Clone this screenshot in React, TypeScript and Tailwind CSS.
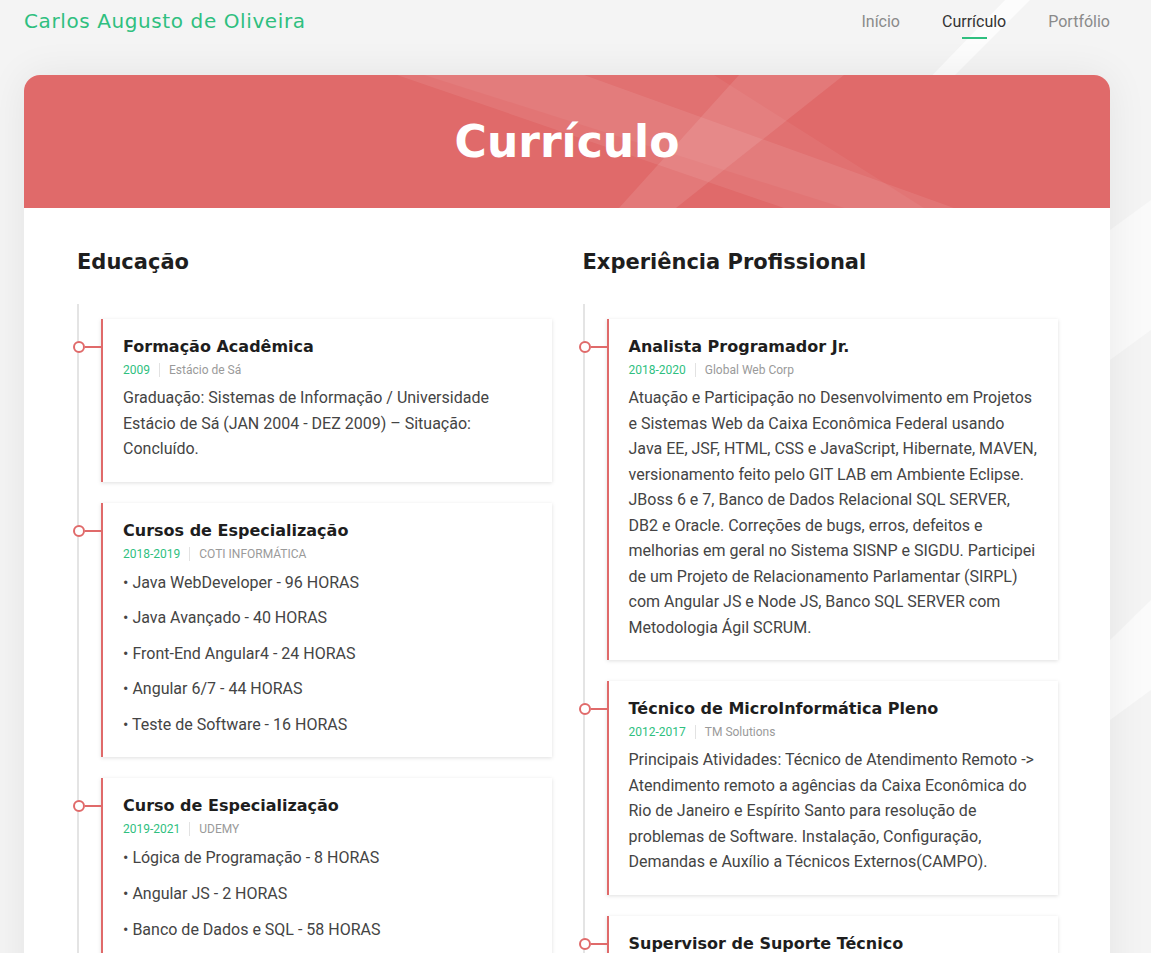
import React from 'react';

type Entry = {
  title: string;
  period: string;
  place: string;
  text?: string;
  items?: string[];
};

const EDUCACAO: Entry[] = [
  {
    title: 'Formação Acadêmica',
    period: '2009',
    place: 'Estácio de Sá',
    text: 'Graduação: Sistemas de Informação / Universidade Estácio de Sá (JAN 2004 - DEZ 2009) – Situação: Concluído.',
  },
  {
    title: 'Cursos de Especialização',
    period: '2018-2019',
    place: 'COTI INFORMÁTICA',
    items: [
      'Java WebDeveloper - 96 HORAS',
      'Java Avançado - 40 HORAS',
      'Front-End Angular4 - 24 HORAS',
      'Angular 6/7 - 44 HORAS',
      'Teste de Software - 16 HORAS',
    ],
  },
  {
    title: 'Curso de Especialização',
    period: '2019-2021',
    place: 'UDEMY',
    items: [
      'Lógica de Programação - 8 HORAS',
      'Angular JS - 2 HORAS',
      'Banco de Dados e SQL - 58 HORAS',
    ],
  },
];

const EXPERIENCIA: Entry[] = [
  {
    title: 'Analista Programador Jr.',
    period: '2018-2020',
    place: 'Global Web Corp',
    text: 'Atuação e Participação no Desenvolvimento em Projetos e Sistemas Web da Caixa Econômica Federal usando Java EE, JSF, HTML, CSS e JavaScript, Hibernate, MAVEN, versionamento feito pelo GIT LAB em Ambiente Eclipse. JBoss 6 e 7, Banco de Dados Relacional SQL SERVER, DB2 e Oracle. Correções de bugs, erros, defeitos e melhorias em geral no Sistema SISNP e SIGDU. Participei de um Projeto de Relacionamento Parlamentar (SIRPL) com Angular JS e Node JS, Banco SQL SERVER com Metodologia Ágil SCRUM.',
  },
  {
    title: 'Técnico de MicroInformática Pleno',
    period: '2012-2017',
    place: 'TM Solutions',
    text: 'Principais Atividades: Técnico de Atendimento Remoto -> Atendimento remoto a agências da Caixa Econômica do Rio de Janeiro e Espírito Santo para resolução de problemas de Software. Instalação, Configuração, Demandas e Auxílio a Técnicos Externos(CAMPO).',
  },
  {
    title: 'Supervisor de Suporte Técnico',
    period: '',
    place: '',
  },
];

const HEAD = "font-['DejaVu_Sans',sans-serif]";

const TimelineCard: React.FC<{ entry: Entry }> = ({ entry }) => (
  <div className="relative ml-[22px] w-[451px] bg-white border-l-2 border-[#e06a6a] shadow-[0_1px_4px_rgba(0,0,0,0.13)] pl-[20px] pr-[20px] pt-[17px] pb-[20px]">
    {/* timeline node */}
    <span className="absolute left-[-30px] top-[22px] w-[12px] h-[12px] rounded-full border-2 border-[#e06a6a] bg-white" />
    <span className="absolute left-[-18px] top-[27px] w-[18px] h-[2px] bg-[#e06a6a]" />

    <h3 className={`${HEAD} text-[16px] leading-[22px] font-bold text-[#1e1e1e]`}>{entry.title}</h3>
    {entry.period && (
      <div className="mt-[4px] flex items-center text-[12px] leading-[16px]">
        <span className="text-[#2fbf7f]">{entry.period}</span>
        <span className="mx-[9px] w-px h-[14px] bg-[#e2e2e2]" />
        <span className="text-[#9a9a9a]">{entry.place}</span>
      </div>
    )}
    {entry.text && (
      <p className="mt-[7px] text-[16px] leading-[25.5px] text-[#444]">{entry.text}</p>
    )}
    {entry.items && (
      <ul className="mt-[8px] space-y-[10px] text-[16px] leading-[25.6px] text-[#444]">
        {entry.items.map((it) => (
          <li key={it}>• {it}</li>
        ))}
      </ul>
    )}
    {!entry.period && <div className="h-[60px]" />}
  </div>
);

const Column: React.FC<{ title: string; entries: Entry[] }> = ({ title, entries }) => (
  <div>
    <h2 className={`${HEAD} text-[21px] leading-[28px] font-bold text-[#1e1e1e]`}>{title}</h2>
    <div className="mt-[28px] border-l-2 border-[#e4e4e4] pt-[15px] flex flex-col gap-[21px]">
      {entries.map((e) => (
        <TimelineCard key={e.title} entry={e} />
      ))}
    </div>
  </div>
);

export default function App() {
  return (
    <div className="relative min-h-screen overflow-hidden bg-[#f4f4f4] font-['Roboto',sans-serif]">
      {/* background streaks */}
      <svg className="absolute inset-0 w-[1151px] h-[953px] pointer-events-none" viewBox="0 0 1151 953">
        <polygon points="1005,0 1030,0 940,90 918,90" fill="#ffffff" opacity="0.7" />
        <polygon points="1110,230 1151,200 1151,330 1110,360" fill="#ffffff" opacity="0.5" />
        <polygon points="1110,640 1151,600 1151,690 1110,720" fill="#ffffff" opacity="0.6" />
      </svg>

      {/* top bar */}
      <header className="relative flex items-start justify-between pl-6 pr-[41px] h-[42px] pt-[8px]">
        <span className={`${HEAD} text-[20px] leading-[26px] tracking-[0.6px] text-[#2fbf7f]`}>Carlos Augusto de Oliveira</span>
        <nav className="flex gap-[42px] pt-[4px] text-[16px] leading-[20px]">
          <a className="text-[#8a8a8a]">Início</a>
          <a className="flex flex-col items-center text-[#333]">
            Currículo
            <span className="mt-[5px] w-[25px] h-[2px] bg-[#2fbf7f]" />
          </a>
          <a className="text-[#8a8a8a]">Portfólio</a>
        </nav>
      </header>

      <main className="relative mx-6 mt-[33px] w-[1086px] rounded-t-[16px] bg-white shadow-[0_0_40px_rgba(0,0,0,0.07)]">
        <div className="relative h-[133px] rounded-t-[16px] bg-[#e06a6a] overflow-hidden flex items-center justify-center">
          <svg className="absolute inset-0 w-full h-full" viewBox="0 0 1086 133" preserveAspectRatio="none">
            <polygon points="373,0 560,0 930,133 760,133" fill="#ffffff" opacity="0.08" />
            <polygon points="715,0 820,0 652,133 595,133" fill="#ffffff" opacity="0.1" />
            <polygon points="400,0 690,0 900,133 820,133" fill="#ffffff" opacity="0.05" />
          </svg>
          <h1 className={`${HEAD} relative text-[44px] leading-[52px] font-bold text-white`}>Currículo</h1>
        </div>

        <div className="grid grid-cols-2 gap-x-[25px] pl-[53px] pr-[47px] pt-[40px]">
          <Column title="Educação" entries={EDUCACAO} />
          <Column title="Experiência Profissional" entries={EXPERIENCIA} />
        </div>
      </main>
    </div>
  );
}
